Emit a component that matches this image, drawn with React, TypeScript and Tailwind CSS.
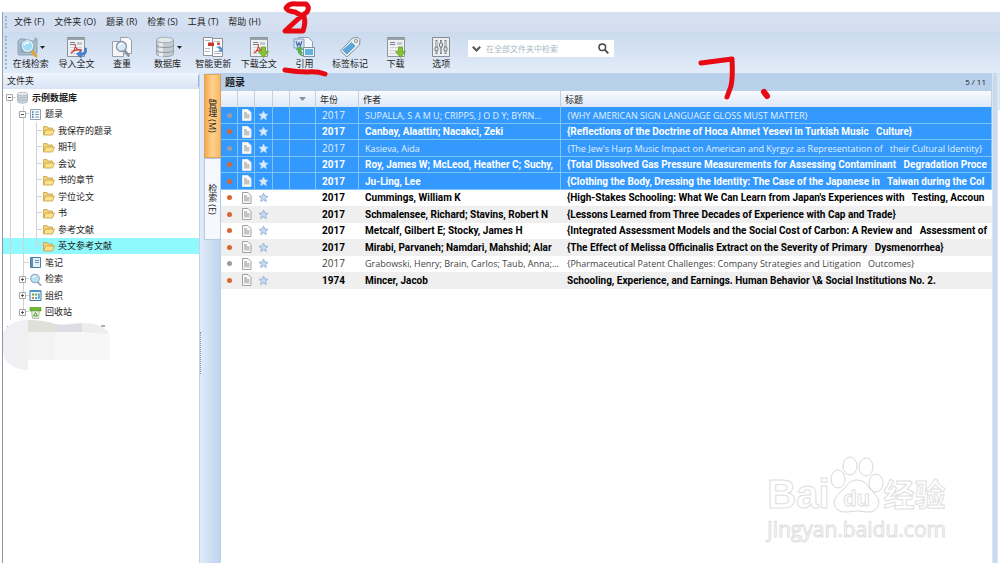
import { useState } from "react";
import type { ReactNode } from "react";
import clsx from "clsx";

type RefRow = {
	year: string;
	author: string;
	title: string;
	read?: boolean;
};

const menus = ["文件 (F)", "文件夹 (O)", "题录 (R)", "检索 (S)", "工具 (T)", "帮助 (H)"];

const rows: RefRow[] = [
	{ year: "2017", author: "SUPALLA, S A M U; CRIPPS, J O D Y; BYRN...", title: "{WHY AMERICAN SIGN LANGUAGE GLOSS MUST MATTER}", read: true },
	{ year: "2017", author: "Canbay, Alaattin; Nacakci, Zeki", title: "{Reflections of the Doctrine of Hoca Ahmet Yesevi in Turkish Music   Culture}" },
	{ year: "2017", author: "Kasieva, Aida", title: "{The Jew's Harp Music Impact on American and Kyrgyz as Representation of   their Cultural Identity}", read: true },
	{ year: "2017", author: "Roy, James W; McLeod, Heather C; Suchy,", title: "{Total Dissolved Gas Pressure Measurements for Assessing Contaminant   Degradation Proce" },
	{ year: "2017", author: "Ju-Ling, Lee", title: "{Clothing the Body, Dressing the Identity: The Case of the Japanese in   Taiwan during the Col" },
	{ year: "2017", author: "Cummings, William K", title: "{High-Stakes Schooling: What We Can Learn from Japan's Experiences with   Testing, Accoun" },
	{ year: "2017", author: "Schmalensee, Richard; Stavins, Robert N", title: "{Lessons Learned from Three Decades of Experience with Cap and Trade}" },
	{ year: "2017", author: "Metcalf, Gilbert E; Stocky, James H", title: "{Integrated Assessment Models and the Social Cost of Carbon: A Review and   Assessment of" },
	{ year: "2017", author: "Mirabi, Parvaneh; Namdari, Mahshid; Alar", title: "{The Effect of Melissa Officinalis Extract on the Severity of Primary   Dysmenorrhea}" },
	{ year: "2017", author: "Grabowski, Henry; Brain, Carlos; Taub, Anna;...", title: "{Pharmaceutical Patent Challenges: Company Strategies and Litigation   Outcomes}", read: true },
	{ year: "1974", author: "Mincer, Jacob", title: "Schooling, Experience, and Earnings. Human Behavior \\& Social Institutions No. 2." },
];

/* ---------- toolbar icons ---------- */

function Icon({ children }: { children: ReactNode }) {
	return (
		<svg viewBox="0 0 22 22" className="size-[22px]" fill="none">
			{children}
		</svg>
	);
}

function OnlineSearchIcon() {
	return (
		<Icon>
			<path d="M1 5l2-2h5l1 2h9V2l2 1v14l-2 2H2l-1-1z" fill="#a9bfcd" stroke="#7d98aa" strokeWidth=".8" />
			<path d="M3 7h14v10H3z" fill="#8fabbc" />
			<path d="M14 14l5 6" stroke="#e0a43c" strokeWidth="3" strokeLinecap="round" />
			<circle cx="10.500" cy="10" r="5.500" fill="#9bdcf7" stroke="#e9f3f8" strokeWidth="1.600" />
			<circle cx="10.500" cy="10" r="6.300" stroke="#6d8ba0" strokeWidth=".6" />
			<path d="M7 9q2-3 5-2" stroke="#fff" strokeWidth="1.400" />
		</Icon>
	);
}

function PageBase() {
	return (
		<>
			<path d="M2.500 1.500h17v19h-17z" fill="#eef0f2" stroke="#8d949b" />
			<path d="M3 2h16v2H3z" fill="#9aa2aa" />
			<path d="M5 6.500h5M5 8.500h5" stroke="#777f87" />
			<path d="M12 6h5v3h-5z" fill="#c3c9cf" />
			<path d="M5 11.500h12M5 14.500h12M5 17.500h12" stroke="#d0d4d8" />
		</>
	);
}

function PdfMark() {
	return <path d="M6 17c4-2 5-7 4-9 0 4 3 7 7 6-4-1-8 0-11 3z" stroke="#d23c32" strokeWidth="1.100" />;
}

function GreenArrow() {
	return <path d="M13.500 11h4v4.500h3L15.500 21.500 10.500 15.500h3z" fill="#86c530" stroke="#5a9818" strokeWidth=".7" />;
}

function ImportIcon() {
	return (
		<Icon>
			<PageBase />
			<PdfMark />
			<path d="M20 12v2q0 3-4 3v-2.500L11.500 18l4.500 4v-2.500q5 0 5.500-4V12z" fill="#4c82d4" stroke="#2d5fae" strokeWidth=".5" />
		</Icon>
	);
}

function DuplicateIcon() {
	return (
		<Icon>
			<path d="M9.500 1.500h8l3 3v13h-11z" fill="#fafafa" stroke="#9aa0a6" />
			<path d="M1.500 5.500h11v15h-11z" fill="#f4f5f6" stroke="#9aa0a6" />
			<path d="M14 15l3.500 4.500" stroke="#8a9198" strokeWidth="2.600" strokeLinecap="round" />
			<circle cx="10.500" cy="10.500" r="5" fill="#d3e9f8" stroke="#8a96a2" strokeWidth="1.300" />
			<path d="M7.500 10q1-2.500 4-2.500" stroke="#fff" strokeWidth="1.300" />
		</Icon>
	);
}

function DatabaseIcon() {
	return (
		<Icon>
			<path d="M2.500 4v14c0 3.500 17 3.500 17 0V4z" fill="#c4ccd2" stroke="#8f989f" strokeWidth=".8" />
			<path d="M5 6v14q2 .7 4 .8V7z" fill="#e8ecef" />
			<ellipse cx="11" cy="4" rx="8.500" ry="2.800" fill="#e3e8eb" stroke="#98a1a8" strokeWidth=".8" />
			<path d="M2.500 9c0 3.300 17 3.300 17 0M2.500 14c0 3.300 17 3.300 17 0" stroke="#8f989f" strokeWidth="1.100" />
		</Icon>
	);
}

function SmartUpdateIcon() {
	return (
		<Icon>
			<path d="M1.500 1.500h9v18h-9z" fill="#fdfdfd" stroke="#8b9299" />
			<path d="M10.500 2.500h10v18h-10z" fill="#fdfdfd" stroke="#8b9299" />
			<path d="M3 4.500h5M3 12.500h5M3 15.500h5M12 5.500h6M12 15.500h7M12 17.500h7" stroke="#b4babf" />
			<path d="M6 6.500h6v3.500H6z" fill="#c63a30" />
			<path d="M15 6.500h3v2.500h-3z" fill="#d0564c" />
			<path d="M14 11l4-1 3 3-1 3-4-1 2-1-2-2z" fill="#5b8fd6" />
		</Icon>
	);
}

function DownloadFullIcon() {
	return (
		<Icon>
			<PageBase />
			<PdfMark />
			<GreenArrow />
		</Icon>
	);
}

function DownloadIcon() {
	return (
		<Icon>
			<PageBase />
			<GreenArrow />
		</Icon>
	);
}

function CiteIcon() {
	return (
		<Icon>
			<path d="M5.500 1.500h10l4 4v11h-14z" fill="#f4f8fb" stroke="#8ba2b5" />
			<path d="M1 3h10v9H1z" fill="#dbe8f5" stroke="#6c8fb8" strokeWidth=".8" />
			<path d="M3 5l1.500 5L6 6.500 7.500 10 9 5" stroke="#4a6fa0" strokeWidth="1.200" />
			<path d="M10.500 11.500h11v9h-11z" fill="#e9f4fb" stroke="#7d93a6" />
			<path d="M12 13h8v6h-8z" fill="#62b3e0" />
			<path d="M3 13.500L7 10.500l3 3-2 .5q0 4 2 6-5-1-5-6z" fill="#5cb848" stroke="#3d8f31" strokeWidth=".5" />
		</Icon>
	);
}

function TagIcon() {
	return (
		<Icon>
			<path d="M13.500 2l5.500-.5 2 2-.5 5.500L8 21l-6.500-6z" fill="#e6ebef" stroke="#7f8890" strokeWidth=".9" />
			<path d="M12.500 6.500l3.500 3.500-8 8-4-3.700z" fill="#58aade" stroke="#3b84b8" strokeWidth=".6" />
			<circle cx="17" cy="5" r="1.500" fill="#fff" stroke="#6f7880" strokeWidth=".8" />
		</Icon>
	);
}

function OptionsIcon() {
	return (
		<Icon>
			<path d="M2.500 1.500h17v19h-17z" fill="#eceff2" stroke="#858c93" />
			<path d="M6.500 4v14M11 4v14M15.500 4v14" stroke="#6c747b" strokeWidth="1.800" />
			<path d="M6.500 5v12M11 5v12M15.500 5v12" stroke="#fff" strokeWidth=".6" />
			<rect x="5" y="11" width="3" height="4" rx="1" fill="#e0e4e8" stroke="#555d64" strokeWidth=".8" />
			<rect x="9.500" y="7" width="3" height="4" rx="1" fill="#e0e4e8" stroke="#555d64" strokeWidth=".8" />
			<rect x="14" y="11" width="3" height="4" rx="1" fill="#e0e4e8" stroke="#555d64" strokeWidth=".8" />
		</Icon>
	);
}

const tools = [
	{ label: "在线检索", icon: <OnlineSearchIcon />, menu: true },
	{ label: "导入全文", icon: <ImportIcon /> },
	{ label: "查重", icon: <DuplicateIcon /> },
	{ label: "数据库", icon: <DatabaseIcon />, menu: true },
	{ label: "智能更新", icon: <SmartUpdateIcon /> },
	{ label: "下载全文", icon: <DownloadFullIcon /> },
	{ label: "引用", icon: <CiteIcon /> },
	{ label: "标签标记", icon: <TagIcon /> },
	{ label: "下载", icon: <DownloadIcon /> },
	{ label: "选项", icon: <OptionsIcon /> },
];

/* ---------- tree icons ---------- */

function SmallIcon({ children }: { children: ReactNode }) {
	return (
		<svg viewBox="0 0 13 13" className="size-[13px] shrink-0" fill="none">
			{children}
		</svg>
	);
}

const treeIcons = {
	db: (
		<SmallIcon>
			<path d="M1.500 3v7.500c0 2.200 10 2.200 10 0V3z" fill="#cbd6de" stroke="#93a0aa" strokeWidth=".6" />
			<ellipse cx="6.500" cy="3" rx="5" ry="1.800" fill="#e6edf2" stroke="#93a0aa" strokeWidth=".6" />
			<path d="M1.500 5.500c0 2 10 2 10 0M1.500 8c0 2 10 2 10 0" stroke="#93a0aa" strokeWidth=".6" />
		</SmallIcon>
	),
	list: (
		<SmallIcon>
			<path d="M1.500 1.500h10v10h-10z" fill="#f7fbfd" stroke="#8fa3b2" />
			<path d="M3 4h1.500M3 6.500h1.500M3 9h1.500" stroke="#2f6ea8" strokeWidth="1.300" />
			<path d="M6 4h4M6 6.500h4M6 9h4" stroke="#5f7a8e" strokeWidth=".8" />
		</SmallIcon>
	),
	folder: (
		<SmallIcon>
			<path d="M1.500 11V2.500h3.500l1 1.500h4.500v2" fill="#f3d470" stroke="#c49f4a" strokeWidth=".8" />
			<path d="M1.500 11l2-5h9l-2 5z" fill="#fbe28a" stroke="#c49f4a" strokeWidth=".8" />
		</SmallIcon>
	),
	note: (
		<SmallIcon>
			<path d="M1.500 1.500h10v10h-10z" fill="#e4f0f8" stroke="#4c7ca0" />
			<path d="M2 2h2v9H2z" fill="#5f93b8" />
			<path d="M6 4.500h4M6 6.500h4" stroke="#4c7ca0" strokeWidth=".8" />
		</SmallIcon>
	),
	search: (
		<SmallIcon>
			<path d="M8.500 9l3 3" stroke="#9fb0bc" strokeWidth="2" strokeLinecap="round" />
			<circle cx="6" cy="5.500" r="4.300" fill="#b7e2f6" stroke="#8fa9ba" strokeWidth="1.100" />
			<path d="M4 5q.7-2 2.700-2" stroke="#fff" strokeWidth="1.100" />
		</SmallIcon>
	),
	org: (
		<SmallIcon>
			<path d="M1 1.500h11v10H1z" fill="#f4f8fb" stroke="#3f78a8" />
			<path d="M1 1h11v2H1z" fill="#4f94cc" />
			<path d="M3 4.500h2v2H3zM6.200 4.500h2v2h-2z" fill="#62a84a" />
			<path d="M3 8h2v2H3z" fill="#d88a2c" />
			<path d="M6.200 8h2v2h-2zM9.200 4.500h1.500v5.500H9.200z" fill="#4f94cc" />
		</SmallIcon>
	),
	bin: (
		<SmallIcon>
			<path d="M1 1.500h11v3.500H1z" fill="#6cbb2e" stroke="#4b9418" strokeWidth=".6" />
			<path d="M2.500 5h8l-1 7.500h-6z" fill="#e5eedc" stroke="#8aa07a" strokeWidth=".6" />
			<path d="M6.500 6.500l2 3.500h-4z" stroke="#57a024" />
		</SmallIcon>
	),
};

type TreeItem = {
	label: string;
	level: 0 | 1 | 2;
	icon: keyof typeof treeIcons;
	toggle?: "+" | "-";
	last?: boolean;
};

const tree: TreeItem[] = [
	{ label: "示例数据库", level: 0, icon: "db", toggle: "-" },
	{ label: "题录", level: 1, icon: "list", toggle: "-" },
	{ label: "我保存的题录", level: 2, icon: "folder" },
	{ label: "期刊", level: 2, icon: "folder" },
	{ label: "会议", level: 2, icon: "folder" },
	{ label: "书的章节", level: 2, icon: "folder" },
	{ label: "学位论文", level: 2, icon: "folder" },
	{ label: "书", level: 2, icon: "folder" },
	{ label: "参考文献", level: 2, icon: "folder" },
	{ label: "英文参考文献", level: 2, icon: "folder", last: true },
	{ label: "笔记", level: 1, icon: "note" },
	{ label: "检索", level: 1, icon: "search", toggle: "+" },
	{ label: "组织", level: 1, icon: "org", toggle: "+" },
	{ label: "回收站", level: 1, icon: "bin", toggle: "+", last: true },
];

function Guide({ branch, end, start, toggle }: { branch: boolean; end?: boolean; start?: boolean; toggle?: "+" | "-" }) {
	return (
		<span className="relative grid h-full w-[13px] shrink-0 grid-cols-2 grid-rows-2">
			<span className={clsx("col-start-2 border-[#d2d2d2]", !start && "border-l", branch && "border-b")} />
			<span className={clsx("col-start-2 border-[#d2d2d2]", !end && "border-l")} />
			{toggle && (
				<svg viewBox="0 0 7 7" className="absolute inset-0 m-auto size-[7px]" fill="none">
					<path d="M.5.5h6v6h-6z" fill="#fff" stroke="#a6a6a6" />
					<path d={toggle === "+" ? "M2 3.500h3M3.500 2v3" : "M2 3.500h3"} stroke="#555" />
				</svg>
			)}
		</span>
	);
}

function Sidebar() {
	const [active, setActive] = useState("英文参考文献");

	return (
		<aside className="flex w-[197px] shrink-0 flex-col border-l border-[#8a99a8] bg-white">
			<h2 className="flex h-4 items-center justify-between bg-linear-to-b from-[#f0f5fc] to-[#d8e4f5] pl-1 text-[9px]">
				文件夹
				<span className="h-3 w-px bg-[#9db4d0]" />
			</h2>
			<ul>
				{tree.map((t, i) => (
					<li key={t.label} className="odd:h-[17px] even:h-[16px]">
						<button
							type="button"
							onClick={() => setActive(t.label)}
							className={clsx("flex h-full w-full items-center text-[9px] whitespace-nowrap", active === t.label && "bg-[#8ff9fd]")}
						>
							<Guide branch={t.level === 0} start={i === 0} toggle={t.level === 0 ? t.toggle : undefined} />
							{t.level > 0 && <Guide branch={t.level === 1} end={t.level === 1 && t.last} toggle={t.level === 1 ? t.toggle : undefined} />}
							{t.level > 1 && <Guide branch end={t.last} />}
							{treeIcons[t.icon]}
							<span className={clsx("pl-[3px]", t.level === 0 && "font-bold")}>{t.label}</span>
						</button>
					</li>
				))}
			</ul>
			<Smudge />
		</aside>
	);
}

function Smudge() {
	return (
		<svg viewBox="0 0 110 52" className="-ml-[3px] h-[52px] w-[110px]" fill="none">
			<path d="M7 7h3M101 6h4" stroke="#555" />
			<path d="M3 13Q10 0 28 0L62 5Q76 1 82 3 104 3 110 16V40H28V50Q8 49 3 34z" fill="#f7f7f7" />
			<path d="M3 13Q10 0 28 0V50Q8 49 3 34z" fill="#f0f0f2" />
			<path d="M28 0Q44 0 55 4V12H28z" fill="#dfe1d8" />
			<path d="M55 4Q66 6 82 3V12H55z" fill="#dcdde0" />
			<path d="M82 3Q104 3 109 14L82 12z" fill="#ededee" />
			<path d="M28 12h27v28H28z" fill="#f2f3f2" />
		</svg>
	);
}

function SideTabs() {
	const [tab, setTab] = useState("manage");

	return (
		<div className="flex w-[22px] shrink-0 bg-linear-to-r from-[#e3edf9] to-[#bcd2ed]">
			<div className="flex w-[5px] items-center border-l border-[#c3d3e8]">
				<span className="mt-[70px] h-[42px] border-l border-dotted border-[#8398b0]" />
			</div>
			<div className="flex flex-1 flex-col pt-px">
				<button
					type="button"
					onClick={() => setTab("manage")}
					className={clsx(
						"flex h-[84px] items-center justify-center border text-[9px] [writing-mode:vertical-rl]",
						tab === "manage" ? "border-[#dba45c] bg-linear-to-r from-[#f5a94f] via-[#ffd18c] to-[#fbb866]" : "border-[#b6cbe4] bg-[#f5f9fe]",
					)}
				>
					管理 (M)
				</button>
				<button
					type="button"
					onClick={() => setTab("search")}
					className={clsx(
						"flex h-[82px] items-center justify-center border text-[9px] [writing-mode:vertical-rl]",
						tab === "search" ? "border-[#dba45c] bg-linear-to-r from-[#f5a94f] via-[#ffd18c] to-[#fbb866]" : "border-[#b6cbe4] bg-[#f5f9fe]",
					)}
				>
					检索 (E)
				</button>
			</div>
		</div>
	);
}

function PageGlyph({ selected }: { selected: boolean }) {
	return (
		<svg viewBox="0 0 11 12" className="mx-auto h-3 w-[11px]" fill="none">
			<path d="M1.500.5h5.500l3 3v8h-8.500z" fill="#fafafa" stroke={selected ? "#dfe6ec" : "#9ea2a6"} />
			<path d="M3 3h3v2h2.500v4.500H3z" fill="#c2c5c8" />
		</svg>
	);
}

function StarGlyph({ selected }: { selected: boolean }) {
	return (
		<svg viewBox="0 0 11 11" className="mx-auto size-[11px]">
			<path
				d="M5.500 1l1.300 3 3.200.3-2.400 2.100.7 3.200-2.800-1.700-2.800 1.700.7-3.200L1 4.300 4.200 4z"
				fill={selected ? "#dcebfa" : "#c5daf2"}
				stroke={selected ? "#bcd8f4" : "#8fabd0"}
				strokeWidth=".8"
			/>
		</svg>
	);
}

function RefTable() {
	const [selected, setSelected] = useState([0, 1, 2, 3, 4]);

	return (
		<table className="w-full table-fixed border-separate border-spacing-0 text-left">
			<colgroup>
				<col className="w-[17px]" />
				<col className="w-[17px]" />
				<col className="w-[18px]" />
				<col className="w-[17px]" />
				<col className="w-[26px]" />
				<col className="w-[43px]" />
				<col className="w-[202px]" />
				<col />
			</colgroup>
			<thead>
				<tr className="h-4 bg-linear-to-b from-[#f8fbff] to-[#dde8f6] text-[9px] leading-[15px] *:border-r *:border-[#c6d0dc] *:p-0 *:pl-1 *:font-normal">
					<th />
					<th />
					<th />
					<th />
					<th>
						<svg viewBox="0 0 7 4" className="ml-[5px] h-1 w-[7px]">
							<path d="M0 0h7L3.500 4z" fill="#8a929b" />
						</svg>
					</th>
					<th>年份</th>
					<th>作者</th>
					<th>标题</th>
				</tr>
			</thead>
			<tbody className="leading-[15px]">
				{rows.map((r, i) => {
					const on = selected.includes(i);
					return (
						<tr
							key={r.title}
							onClick={() => setSelected([i])}
							className={clsx(
								"odd:h-[17px] even:h-[16px] *:overflow-hidden *:border-r *:border-b *:p-0 *:whitespace-pre",
								on ? "bg-[#3399ff] *:border-[#7cc3f6]" : "*:border-transparent odd:bg-[#efefef]",
								r.read ? "text-[9px]" : "font-['Roboto',sans-serif] text-[10px] font-bold",
								r.read ? (on ? "text-[#e2f0fd]" : "text-[#444]") : on ? "text-white" : "text-black",
							)}
						>
							<td>
								<span className={clsx("mx-auto block size-[5px] rounded-full", r.read ? "bg-[#9a9da0]" : "bg-[#d9652f]")} />
							</td>
							<td>
								<PageGlyph selected={on} />
							</td>
							<td>
								<StarGlyph selected={on} />
							</td>
							<td />
							<td />
							<td className="text-[10px]">
								<span className="pl-[6px]">{r.year}</span>
							</td>
							<td>
								<span className="pl-[6px]">{r.author}</span>
							</td>
							<td>
								<span className="pl-[6px]">{r.title}</span>
							</td>
						</tr>
					);
				})}
			</tbody>
		</table>
	);
}

function Watermark() {
	return (
		<div className="pointer-events-none absolute right-[54px] bottom-[20px] whitespace-nowrap text-white [-webkit-text-stroke:1px_#e0e0e0]">
			<div className="flex h-[60px] items-end font-['Liberation_Sans','Noto_Sans_CJK_SC',sans-serif] font-bold">
				<span className="text-[40px] leading-[42px]">Bai</span>
				<span className="relative h-[60px] w-[54px]">
					<svg viewBox="0 0 54 60" className="h-[60px] w-[54px]" fill="#fff" stroke="#d8d8d8">
						<ellipse cx="8" cy="24" rx="7" ry="9" />
						<ellipse cx="20" cy="11" rx="7" ry="9" />
						<ellipse cx="36" cy="12" rx="7" ry="9" />
						<ellipse cx="46" cy="28" rx="7" ry="9" />
						<path d="M27 25q8 0 12 8 9 8 10 14-1 11-12 10-10-2-20 0-12 1-13-10 1-6 11-14 4-8 12-8z" />
					</svg>
					<span className="absolute inset-x-0 bottom-1 text-center text-[22px] leading-[24px]">du</span>
				</span>
				<span className="text-[31px] leading-[38px]">经验</span>
			</div>
			<div className="text-[21px] leading-[28px]">jingyan.baidu.com</div>
		</div>
	);
}

/* red pen marks drawn over the window */
function PenMarks() {
	return (
		<svg
			viewBox="0 0 500 110"
			className="pointer-events-none absolute top-0 left-[280px] h-[110px] w-[500px]"
			fill="none"
			stroke="#e80a12"
			strokeWidth="5"
			strokeLinecap="round"
			strokeLinejoin="round"
		>
			<path d="M15 12Q7 11 6 8 9 3 17 4L26 4Q30 7 27 12L18 19 5 31 23 31Q26 22 24 17L15 12" />
			<path d="M5 70q12 2 22 2 10-1 18 2" />
			<path d="M421 63l31-4q1 18-1 27l-4 11" />
			<path d="M484 92l3 4" strokeWidth="6" />
		</svg>
	);
}

export default function App() {
	return (
		<div className="relative flex min-h-screen flex-col overflow-hidden bg-white pt-3 pl-[2px] font-['Open_Sans','Noto_Sans_CJK_SC',sans-serif] text-[#1c1c1c]">
			<header className="border-l border-[#8fa3ba] bg-linear-to-b from-[#d6e1f1] to-[#cad9ed]">
				<nav className="flex h-5 items-center gap-[10px] pl-[2px]">
					<span className="-mr-[3px] h-3 border-l-2 border-dotted border-[#9fb3cc]" />
					{menus.map((m) => (
						<button key={m} type="button" className="text-[9px] whitespace-nowrap">
							{m}
						</button>
					))}
				</nav>
				<div className="flex h-[41px] bg-linear-to-b from-[#cbdaee] to-[#e2ecf9] pl-[2px]">
					<span className="my-1 mr-px border-l-2 border-dotted border-[#9fb3cc]" />
					<div className="grid w-[456px] grid-cols-10">
						{tools.map((t) => (
							<button key={t.label} type="button" className="flex flex-col items-center pt-1">
								<span className="flex items-center">
									{t.icon}
									{t.menu && (
										<svg viewBox="0 0 5 3" className="ml-px h-[3px] w-[5px]">
											<path d="M0 0h5L2.500 3z" fill="#222" />
										</svg>
									)}
								</span>
								<span className="text-[9px] leading-[12px] whitespace-nowrap">{t.label}</span>
							</button>
						))}
					</div>
					<label className="mt-2 ml-1 flex h-[17px] w-[146px] items-center bg-white px-1">
						<svg viewBox="0 0 9 6" className="h-[6px] w-[9px]" fill="none" stroke="#555" strokeWidth="2">
							<path d="M.8.8l3.700 3.700L8.200.8" />
						</svg>
						<input
							type="text"
							aria-label="在全部文件夹中检索"
							placeholder="在全部文件夹中检索"
							className="min-w-0 flex-1 pl-[5px] text-[8px] outline-none placeholder:text-[#a9b8c2]"
						/>
						<svg viewBox="0 0 11 11" className="mr-px size-[11px]" fill="none" stroke="#444">
							<circle cx="4.300" cy="4.300" r="3.300" strokeWidth="1.500" />
							<path d="M6.800 6.800l3.500 3.500" strokeWidth="1.800" />
						</svg>
					</label>
				</div>
			</header>

			<div className="flex flex-1">
				<Sidebar />
				<SideTabs />
				<main className="min-w-0 flex-1 bg-white">
					<div className="flex h-[18px] items-center justify-between bg-[#b9d0eb] pr-[6px] pl-1">
						<h1 className="text-[10px] font-bold">题录</h1>
						<span className="text-[8px]">5 / 11</span>
					</div>
					<RefTable />
				</main>
				<div className="w-[6px] border-x border-[#dbe6f5] bg-[#c9daf0]" />
				<div className="w-[2px] bg-white">
					<div className="h-[37px] bg-[#dce7f5]" />
				</div>
			</div>

			<Watermark />
			<PenMarks />
		</div>
	);
}
